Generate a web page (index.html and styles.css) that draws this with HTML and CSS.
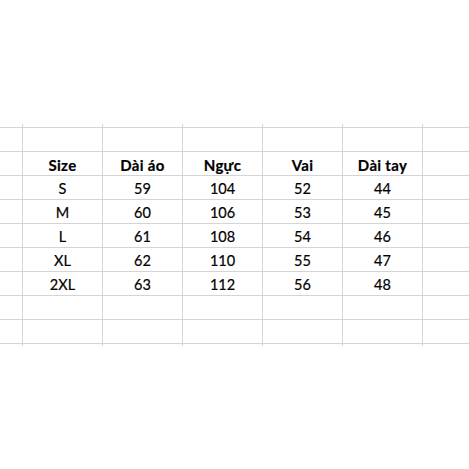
FILE: index.html
```html
<!DOCTYPE html>
<html lang="vi">
<head>
<meta charset="utf-8">
<title>Bảng size</title>
<link rel="stylesheet" href="styles.css">
</head>
<body>
<div class="sheet">
  <div class="row stub top"><div></div><div></div><div></div><div></div><div></div><div></div><div></div></div>
  <div class="row"><div></div><div></div><div></div><div></div><div></div><div></div><div></div></div>
  <div class="row head"><div></div><div>Size</div><div>Dài áo</div><div>Ngực</div><div>Vai</div><div>Dài tay</div><div></div></div>
  <div class="row"><div></div><div>S</div><div>59</div><div>104</div><div>52</div><div>44</div><div></div></div>
  <div class="row"><div></div><div>M</div><div>60</div><div>106</div><div>53</div><div>45</div><div></div></div>
  <div class="row"><div></div><div>L</div><div>61</div><div>108</div><div>54</div><div>46</div><div></div></div>
  <div class="row"><div></div><div>XL</div><div>62</div><div>110</div><div>55</div><div>47</div><div></div></div>
  <div class="row"><div></div><div>2XL</div><div>63</div><div>112</div><div>56</div><div>48</div><div></div></div>
  <div class="row"><div></div><div></div><div></div><div></div><div></div><div></div><div></div></div>
  <div class="row"><div></div><div></div><div></div><div></div><div></div><div></div><div></div></div>
  <div class="row stub bottom"><div></div><div></div><div></div><div></div><div></div><div></div><div></div></div>
</div>
</body>
</html>
```
FILE: styles.css
```css
html, body {
  margin: 0;
  padding: 0;
  background: #ffffff;
}
body {
  width: 469px;
  height: 469px;
  overflow: hidden;
  font-family: Lato, "Open Sans", sans-serif;
  font-size: 14.5px;
  color: #000000;
}
.sheet {
  padding-top: 124px;
  display: flex;
  flex-direction: column;
}
.row {
  display: grid;
  grid-template-columns: 22px repeat(5, 80px) 1fr;
  height: 24px;
}
.row > div {
  border-bottom: 1px solid #d4d4d4;
  display: flex;
  align-items: flex-end;
  justify-content: center;
  line-height: 18px;
  padding-bottom: 1px;
  white-space: nowrap;
  -webkit-text-stroke: 0.2px #000000;
}
.row > div + div {
  border-left: 1px solid #d4d4d4;
}
.row.stub.top {
  height: 4px;
}
.row.stub.bottom {
  height: 2px;
}
.row.stub.bottom > div {
  border-bottom: none;
}
.row.stub > div {
  padding-bottom: 0;
}
.head > div {
  font-weight: 700;
  font-size: 15px;
  letter-spacing: 0.3px;
}
```
